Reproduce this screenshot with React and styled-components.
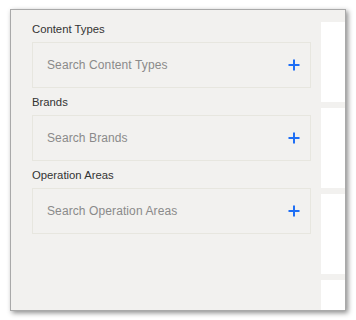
import React from 'react';
import styled, { createGlobalStyle } from 'styled-components';

const GlobalStyle = createGlobalStyle`
  html, body {
    margin: 0;
    padding: 0;
    background: #ffffff;
  }
  body {
    font-family: "Liberation Sans", Arial, sans-serif;
  }
`;

const Page = styled.div`
  width: 356px;
  height: 320px;
  padding: 10px 11px 10px 11px;
  box-sizing: border-box;
  background: #ffffff;
  overflow: hidden;
`;

const Window = styled.div`
  width: 334px;
  height: 300px;
  display: flex;
  background: #f2f1ef;
  overflow: hidden;
  box-shadow: 0 0 0 1px #a9a9a9, 2px 2px 5px 1px rgba(0, 0, 0, 0.45);
`;

const Panel = styled.div`
  width: 310px;
  flex-shrink: 0;
  box-sizing: border-box;
  padding: 11px 10px 0 21px;
  display: flex;
  flex-direction: column;
`;

const Label = styled.div`
  font-size: 11.3px;
  line-height: 16px;
  color: #333333;
  margin-bottom: 5px;
`;

const SearchBox = styled.div`
  height: 46px;
  box-sizing: border-box;
  border: 1px solid #e7e6df;
  background: #f2f1ef;
  display: flex;
  align-items: center;
  justify-content: space-between;
  padding: 0 10px 0 14px;
  margin-bottom: 6px;
`;

const Placeholder = styled.span`
  font-size: 12px;
  color: #8a8a8a;
  letter-spacing: 0.1px;
`;

const AddButton = styled.button`
  border: none;
  background: none;
  padding: 0;
  width: 12px;
  height: 12px;
  display: flex;
  align-items: center;
  justify-content: center;
  cursor: pointer;
`;

const Side = styled.div`
  flex: 1;
  padding-top: 12px;
  display: flex;
  flex-direction: column;
  gap: 6px;
`;

const SideCard = styled.div`
  height: 80px;
  flex-shrink: 0;
  background: #ffffff;
`;

const Plus = () => (
  <svg width="12" height="12" viewBox="0 0 12 12">
    <path d="M6 0.5v11M0.5 6h11" stroke="#1f6ff5" strokeWidth="2" fill="none" />
  </svg>
);

const filters = ['Content Types', 'Brands', 'Operation Areas'];

export default function App() {
  return (
    <>
      <GlobalStyle />
      <Page>
        <Window>
          <Panel>
            {filters.map(name => (
              <React.Fragment key={name}>
                <Label>{name}</Label>
                <SearchBox>
                  <Placeholder>Search {name}</Placeholder>
                  <AddButton aria-label={'Add ' + name}>
                    <Plus />
                  </AddButton>
                </SearchBox>
              </React.Fragment>
            ))}
          </Panel>
          <Side>
            <SideCard />
            <SideCard />
            <SideCard />
            <SideCard />
          </Side>
        </Window>
      </Page>
    </>
  );
}
